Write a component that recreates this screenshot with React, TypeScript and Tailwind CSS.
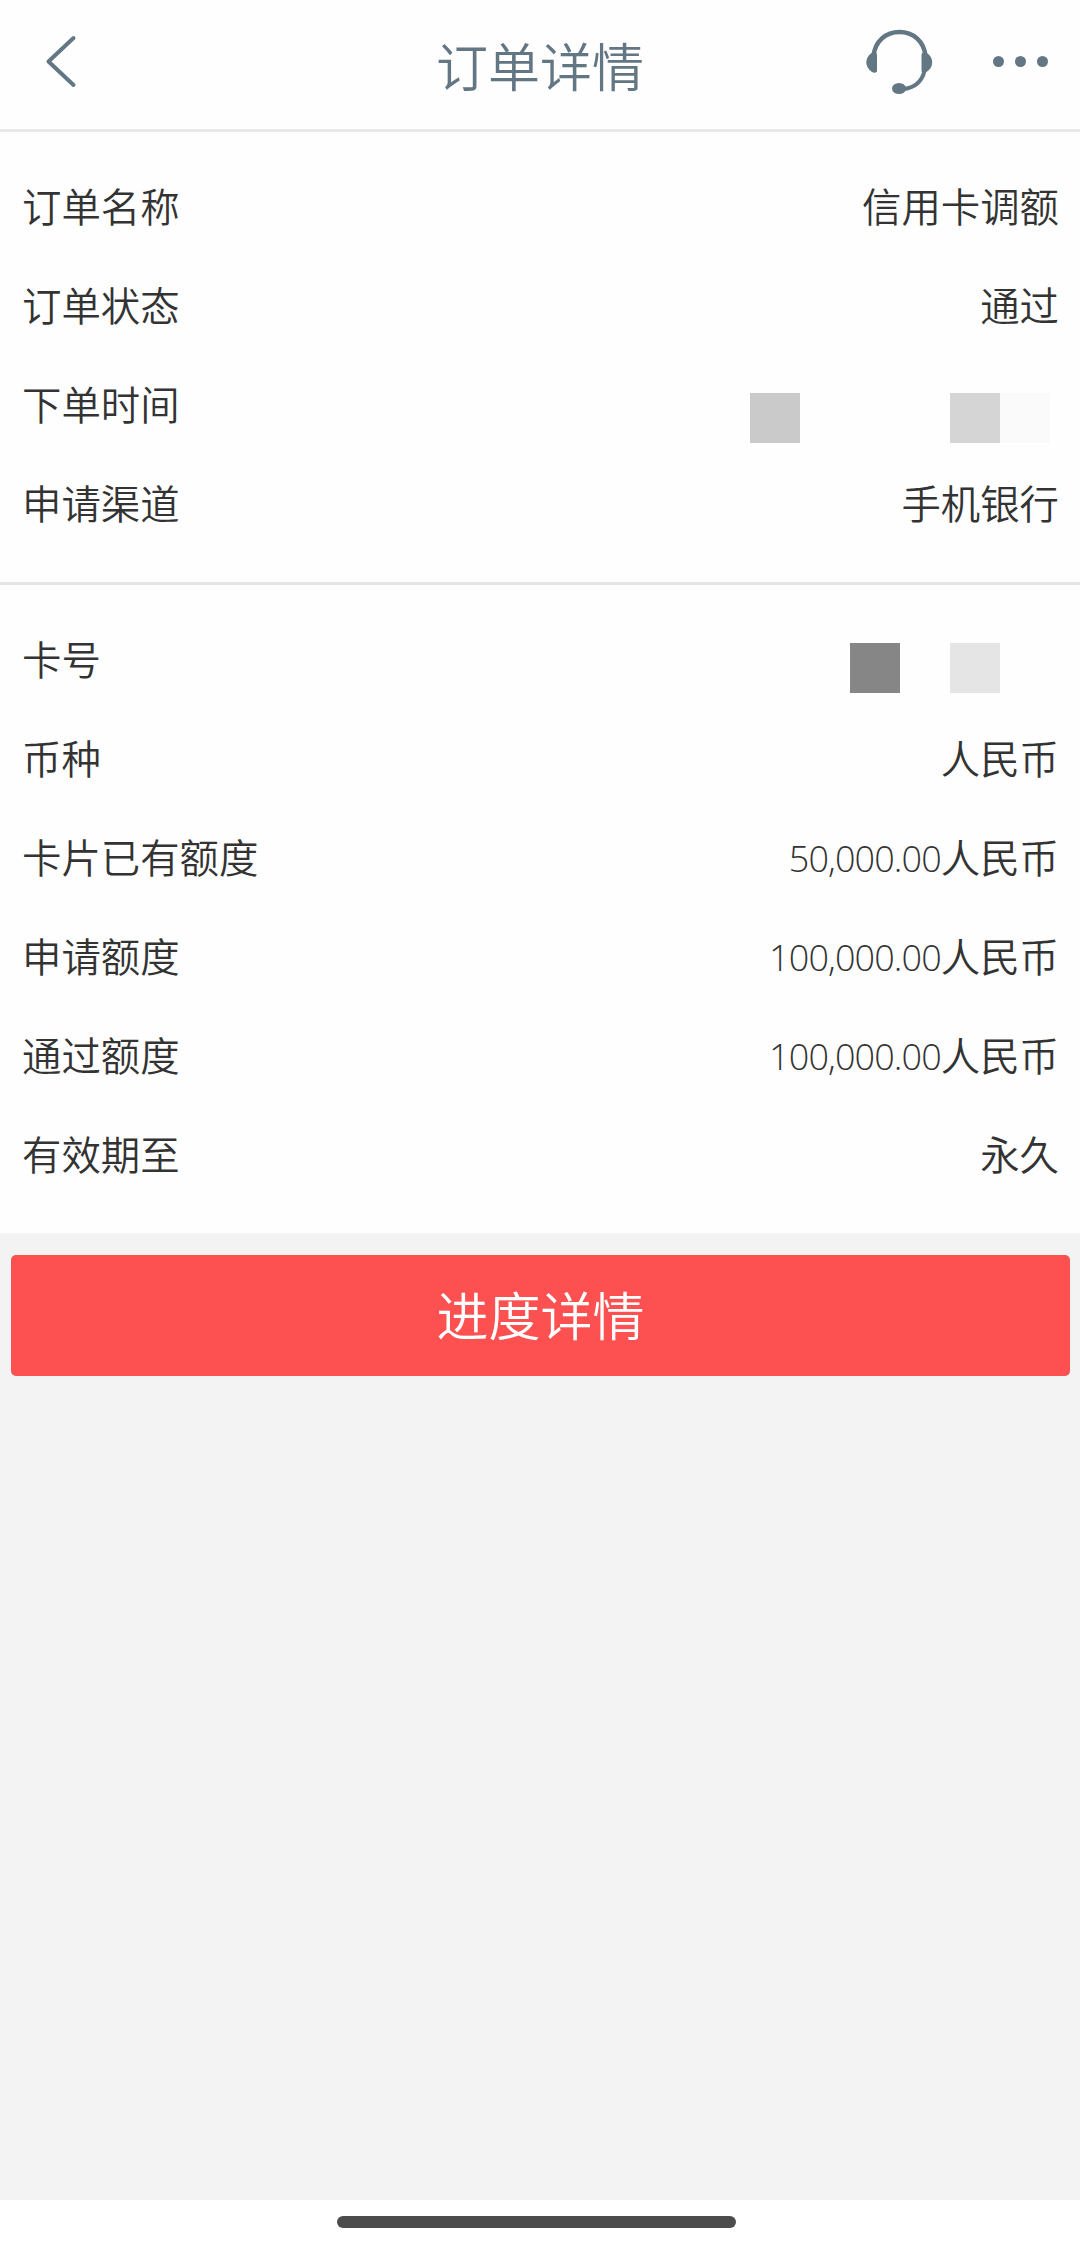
import type { ReactNode } from "react";

type Block = {
  color: string;
};

type RowProps = {
  label: string;
  amount?: string;
  children?: ReactNode;
};

function Row({ label, amount, children }: RowProps) {
  return (
    <div className="flex h-[99px] items-center justify-between pr-[21px] pb-[7px] pl-[22px] text-[39.4px] leading-none">
      <span>{label}</span>
      <span className="flex items-center">
        {amount && (
          <span className="pt-[5px] font-['Open_Sans'] text-[36px] font-light tracking-[-0.9px]">{amount}</span>
        )}
        <span>{children}</span>
      </span>
    </div>
  );
}

function MaskedRow({ label, className, blocks }: { label: string; className: string; blocks: Block[] }) {
  return (
    <div className="flex h-[99px] justify-between pl-[22px] text-[39.4px] leading-none">
      <span className="self-center pb-[7px]">{label}</span>
      <div className={`flex ${className}`}>
        {blocks.map((block, index) => (
          <span key={index} className={`size-[50px] ${block.color}`} />
        ))}
      </div>
    </div>
  );
}

function BackIcon() {
  return (
    <svg className="ml-[44px] h-[54px] w-[34px]" viewBox="0 0 34 54" fill="none">
      <path d="M29.5 3L4.5 26.5L29.5 50" stroke="currentColor" strokeWidth="4" strokeLinecap="round" strokeLinejoin="round" />
    </svg>
  );
}

function HeadsetIcon() {
  return (
    <svg className="h-[66px] w-[68px]" viewBox="0 0 68 66" fill="none">
      <path d="M7.5 27C9 12 20 3 33.5 3S58 12 59.5 27" stroke="currentColor" strokeWidth="4.5" />
      <path d="M58.5 42C56 52 49 58.5 38 60" stroke="currentColor" strokeWidth="4" />
      <path d="M5.5 24C8 23 11 23.5 11 26V42C11 44 8 44 6 43C-1.5 38.5 -1.5 28.5 5.5 24Z" fill="currentColor" />
      <path d="M61 24C58.5 23 55.5 23.5 55.5 26V42C55.5 44 58.5 44 60.5 43C68 38.5 68 28.5 61 24Z" fill="currentColor" />
      <ellipse cx="33" cy="59.5" rx="7" ry="5.5" fill="currentColor" />
    </svg>
  );
}

export default function App() {
  return (
    <div className="flex h-[2243px] w-[1080px] flex-col bg-[#f3f3f3] font-['Noto_Sans_CJK_SC',sans-serif] font-[350] text-[#333333]">
      <header className="grid h-[132px] grid-cols-3 items-center border-b-[3px] border-[#e9e9e9] bg-[#fefefe] pb-[6px] text-[#637684]">
        <BackIcon />
        <h1 className="pt-[6px] text-center text-[52px] leading-none">订单详情</h1>
        <div className="flex items-center justify-end gap-[59px] pr-[32px]">
          <HeadsetIcon />
          <div className="flex gap-[11px]">
            <span className="size-[11px] rounded-full bg-current" />
            <span className="size-[11px] rounded-full bg-current" />
            <span className="size-[11px] rounded-full bg-current" />
          </div>
        </div>
      </header>

      <section className="h-[453px] border-b-[3px] border-[#e4e4e4] bg-[#fefefe] pt-[27px]">
        <Row label="订单名称">信用卡调额</Row>
        <Row label="订单状态">通过</Row>
        <MaskedRow
          label="下单时间"
          className="pt-[36px] pr-[30px]"
          blocks={[
            { color: "bg-[#cacaca]" },
            { color: "bg-transparent" },
            { color: "bg-transparent" },
            { color: "bg-transparent" },
            { color: "bg-[#d5d5d5]" },
            { color: "bg-[#fafafa]" },
          ]}
        />
        <Row label="申请渠道">手机银行</Row>
      </section>

      <section className="h-[648px] bg-[#fefefe] pt-[27px]">
        <MaskedRow
          label="卡号"
          className="pt-[31px] pr-[80px]"
          blocks={[{ color: "bg-[#868686]" }, { color: "bg-transparent" }, { color: "bg-[#e5e5e5]" }]}
        />
        <Row label="币种">人民币</Row>
        <Row label="卡片已有额度" amount="50,000.00">人民币</Row>
        <Row label="申请额度" amount="100,000.00">人民币</Row>
        <Row label="通过额度" amount="100,000.00">人民币</Row>
        <Row label="有效期至">永久</Row>
      </section>

      <main className="flex-1 pt-[22px] pr-[10px] pl-[11px]">
        <button className="h-[121px] w-full rounded-[5px] bg-[#fd5050] pb-[4px] text-[52px] leading-none text-white">
          进度详情
        </button>
      </main>

      <footer className="flex h-[43px] justify-center bg-white pt-[16px]">
        <div className="mr-[7px] h-[12px] w-[399px] rounded-full bg-[#4c4c4c]" />
      </footer>
    </div>
  );
}
